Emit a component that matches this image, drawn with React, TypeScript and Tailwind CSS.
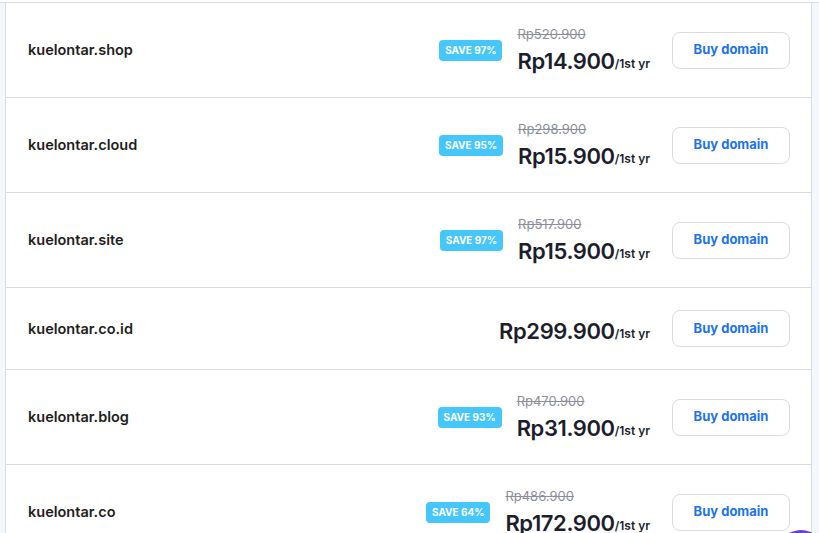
import React from "react";

type Domain = {
  name: string;
  oldPrice?: string;
  price: string;
  save?: string;
};

const domains: Domain[] = [
  { name: "kuelontar.shop", oldPrice: "Rp520.900", price: "Rp14.900", save: "SAVE 97%" },
  { name: "kuelontar.cloud", oldPrice: "Rp298.900", price: "Rp15.900", save: "SAVE 95%" },
  { name: "kuelontar.site", oldPrice: "Rp517.900", price: "Rp15.900", save: "SAVE 97%" },
  { name: "kuelontar.co.id", price: "Rp299.900" },
  { name: "kuelontar.blog", oldPrice: "Rp470.900", price: "Rp31.900", save: "SAVE 93%" },
  { name: "kuelontar.co", oldPrice: "Rp486.900", price: "Rp172.900", save: "SAVE 64%" },
];

function DomainRow({ domain }: { domain: Domain }) {
  return (
    <div className="flex items-center justify-between border-b border-[#dadce0] py-[22px] pl-[22px] pr-[21px]">
      <span className="text-[14.5px] font-semibold text-[#1d1e20]">{domain.name}</span>
      <div className="flex items-center">
        {domain.save && (
          <span className="mr-[15px] flex h-[21px] items-center rounded-[4px] bg-[#45c6fc] px-[6px] text-[10px] font-bold text-white">
            {domain.save}
          </span>
        )}
        <div className="flex flex-col items-start">
          {domain.oldPrice && (
            <div className="h-[18px] pt-[1px] text-[13px] leading-[17px] text-[#8c8e99] line-through">{domain.oldPrice}</div>
          )}
          <div className="flex h-[32px] items-end pb-[2px]">
            <span className="text-[22px] font-semibold leading-[24px] tracking-[-0.4px] text-[#1d1e2c]">{domain.price}</span>
            <span className="pb-[1px] text-[12px] font-semibold leading-[16px] text-[#1d1e2c]">/1st yr</span>
          </div>
        </div>
        <button className="ml-[22px] h-[37px] w-[118px] rounded-[8px] border border-[#dadce0] bg-white text-[13px] font-bold text-[#1a73e8]">
          Buy domain
        </button>
      </div>
    </div>
  );
}

export default function App() {
  return (
    <div className="relative h-[533px] w-[819px] overflow-hidden bg-white" style={{ fontFamily: "Inter, 'Noto Sans', sans-serif" }}>
      <div className="h-[2px] bg-white" />
      <div className="border-t border-[#dadce0] bg-[#f4f8fd] pl-[5px] pr-[7px]">
        <div className="border-x border-[#dadce0] bg-white">
          {domains.map((d) => (
            <DomainRow key={d.name} domain={d} />
          ))}
        </div>
      </div>
      <div className="absolute left-[778px] top-[530px] h-[46px] w-[46px] rounded-full bg-[#673de6]" />
    </div>
  );
}
